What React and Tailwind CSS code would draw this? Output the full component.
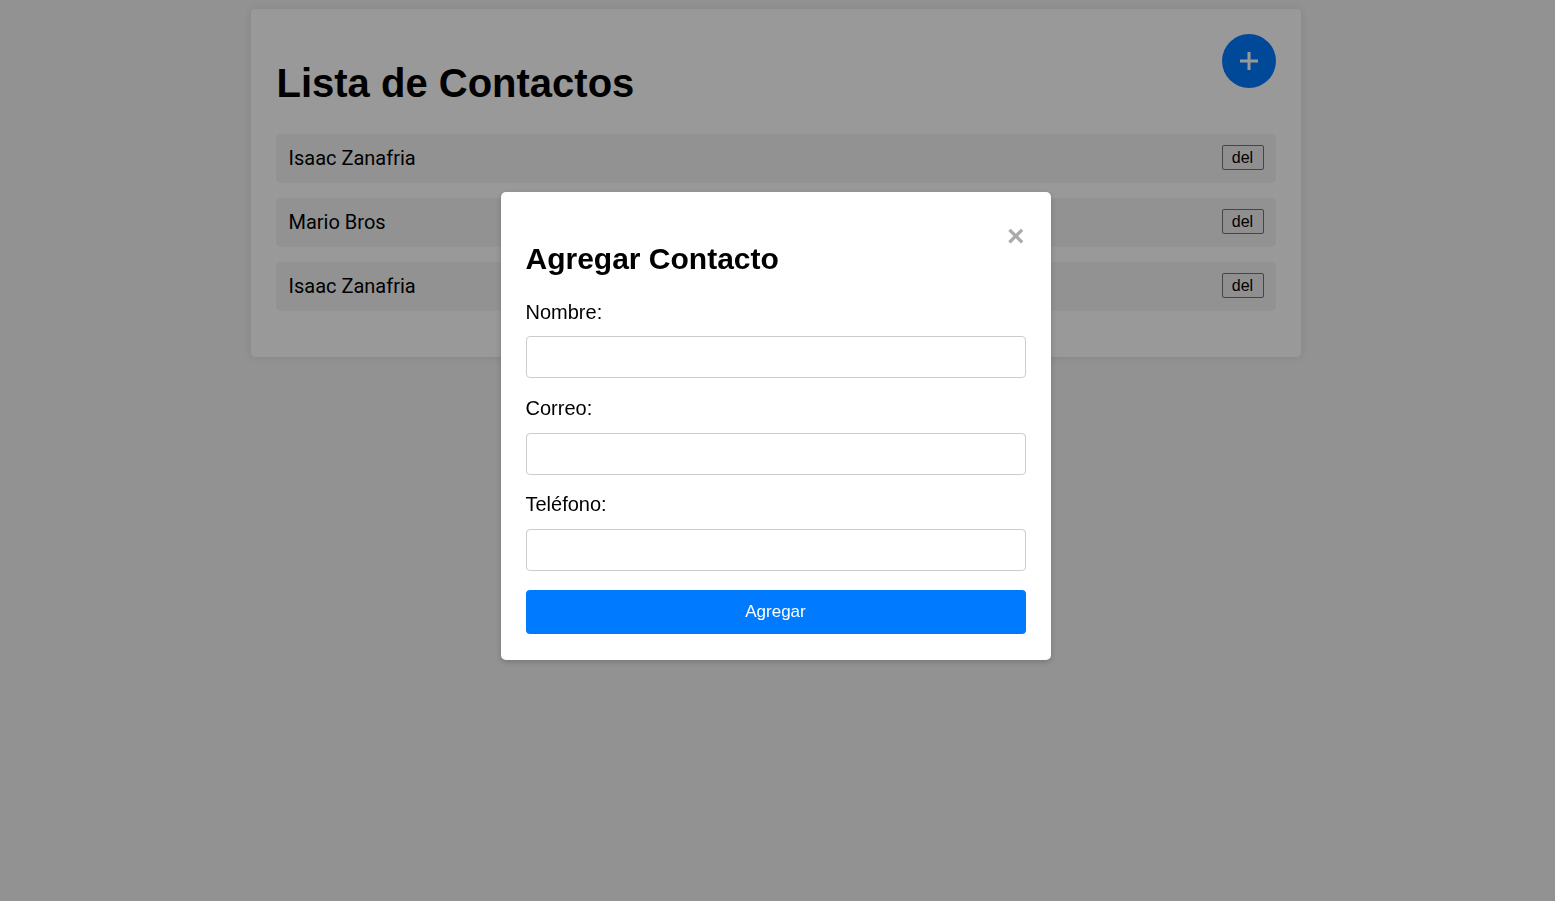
import React from 'react';

const contacts = [
  { id: 1, name: 'Isaac Zanafria' },
  { id: 2, name: 'Mario Bros' },
  { id: 3, name: 'Isaac Zanafria' },
];

const fields = [
  { label: 'Nombre:', labelGap: 'mb-[12px]', inputGap: 'mb-[19px]' },
  { label: 'Correo:', labelGap: 'mb-[13px]', inputGap: 'mb-[18px]' },
  { label: 'Teléfono:', labelGap: 'mb-[13px]', inputGap: 'mb-[19px]' },
];

const App = () => {
  return (
    <div className="min-h-[901px] bg-[#f4f4f4] pt-[9px] pr-[4px] font-['Liberation_Sans',Arial,sans-serif] text-black">
      <div className="mx-auto w-[1050px] rounded-[4px] bg-white p-[25px] pb-[46px] shadow-[0_0_10px_rgba(0,0,0,0.1)]">
        <div className="flex items-start justify-between">
          <h1 className="mt-[26px] mb-[28px] ml-[1px] text-[40px] font-bold leading-[46px]">Lista de Contactos</h1>
          <button className="flex h-[54px] w-[54px] items-center justify-center rounded-full bg-[#007bff]">
            <svg width="20" height="20" viewBox="0 0 20 20">
              <path d="M10 1v18M1 10h18" stroke="#fff" strokeWidth="3" />
            </svg>
          </button>
        </div>
        <ul className="flex flex-col gap-[15px]">
          {contacts.map((c) => (
            <li
              key={c.id}
              className="flex items-center justify-between rounded-[5px] bg-[#f4f4f4] pl-[13px] pr-[12px] py-[12px]"
            >
              <span className="font-['Roboto',sans-serif] text-[20px] leading-[25px]">{c.name}</span>
              <button className="h-[25px] w-[42px] -translate-y-[1px] rounded-[2px] border border-[#767676] bg-[#efefef] text-[16px] leading-[20px]">
                del
              </button>
            </li>
          ))}
        </ul>
      </div>

      <div className="fixed inset-0 bg-black/40 pt-[192px] pr-[4px]">
        <div className="relative mx-auto w-[550px] rounded-[5px] bg-white p-[25px] pb-[26px] shadow-[0_2px_6px_rgba(0,0,0,0.2)]">
          <span className="absolute right-[26px] top-[29px] text-[30px] font-bold leading-[30px] text-[#aaaaaa]">
            ×
          </span>
          <h2 className="mt-[25px] mb-[25px] text-[30px] font-bold leading-[34px]">Agregar Contacto</h2>
          {fields.map((f) => (
            <div key={f.label}>
              <label className={`block text-[20px] leading-[23px] ${f.labelGap}`}>{f.label}</label>
              <input
                type="text"
                className={`block h-[42px] w-full rounded-[4px] border border-[#cccccc] bg-white px-[10px] ${f.inputGap}`}
              />
            </div>
          ))}
          <button className="block h-[44px] w-full rounded-[4px] bg-[#007bff] text-[17px] text-white">
            Agregar
          </button>
        </div>
      </div>
    </div>
  );
};

export default App;
